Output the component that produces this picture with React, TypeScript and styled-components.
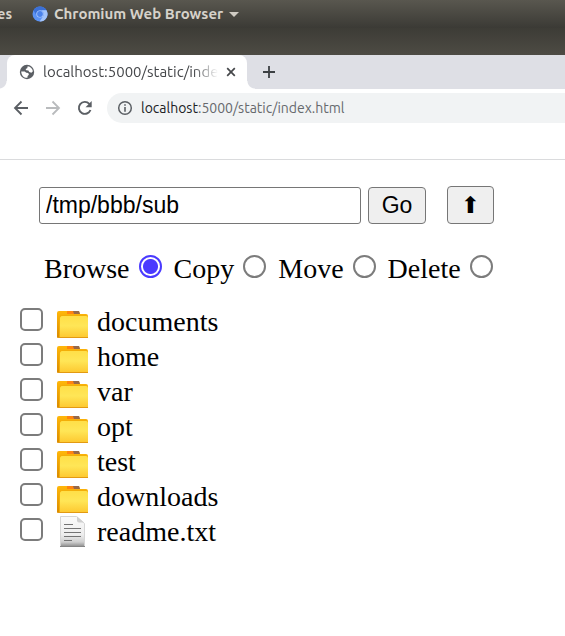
import React, { useState } from "react";
import styled, { createGlobalStyle } from "styled-components";

const uiFont = `"Ubuntu", "Noto Sans", "Open Sans", sans-serif`;

const GlobalStyle = createGlobalStyle`
  *, *::before, *::after { box-sizing: border-box; }
  body { margin: 0; background: #fff; overflow-x: hidden; }
`;

const Window = styled.div`
  color: #000;
  font-family: "Liberation Serif", "Times New Roman", serif;
  font-size: 28px;
`;

const SystemBar = styled.header`
  display: flex;
  align-items: center;
  height: 28px;
  background: linear-gradient(#59574f, #3b3a35);
  color: #d6d2ca;
  font: 700 15px/28px ${uiFont};
  white-space: nowrap;
`;

const Activities = styled.button`
  width: 12px;
  margin-right: 20px;
  padding: 0;
  border: 0;
  background: none;
  color: inherit;
  font: 700 14px/28px ${uiFont};
  text-align: left;
  direction: rtl;
`;

const AppMenu = styled.button`
  display: flex;
  align-items: center;
  gap: 6px;
  padding: 0;
  border: 0;
  background: none;
  color: inherit;
  font: inherit;
`;

const TitleBar = styled.div`
  height: 27px;
  background: linear-gradient(#3d3c36, #4d4b44);
`;

const TabStrip = styled.div`
  display: flex;
  align-items: center;
  height: 34px;
  padding-left: 7px;
  background: #dedfe5;
`;

const Tab = styled.div`
  position: relative;
  display: flex;
  align-items: center;
  width: 240px;
  height: 34px;
  padding: 0 8px 0 12px;
  border-radius: 8px 8px 0 0;
  background: #fff;
  color: #45474a;
  font: 15px/34px ${uiFont};

  &::before,
  &::after {
    content: "";
    position: absolute;
    bottom: 0;
    width: 8px;
    height: 8px;
  }
  &::before {
    right: 100%;
    background: radial-gradient(circle at 0 0, transparent 7px, #fff 8px);
  }
  &::after {
    left: 100%;
    background: radial-gradient(circle at 100% 0, transparent 7px, #fff 8px);
  }
`;

const TabTitle = styled.span`
  flex: 1;
  min-width: 0;
  margin: 0 5px 0 8px;
  overflow: hidden;
  white-space: nowrap;
  mask-image: linear-gradient(90deg, #000 86%, transparent);
`;

const IconButton = styled.button`
  display: grid;
  place-items: center;
  flex: none;
  width: 16px;
  height: 16px;
  padding: 0;
  border: 0;
  background: none;
`;

const NewTab = styled(IconButton)`
  margin-left: 14px;
`;

const Toolbar = styled.div`
  display: flex;
  align-items: center;
  gap: 16px;
  height: 38px;
  padding-left: 13px;
  background: #fff;
`;

const AddressBar = styled.div`
  display: flex;
  align-items: center;
  flex: 1;
  gap: 8px;
  height: 30px;
  margin-left: -2px;
  padding-left: 10px;
  border-radius: 15px 0 0 15px;
  background: #f1f3f4;
  color: #66696d;
  font: 14px/30px ${uiFont};
  white-space: nowrap;
`;

const Host = styled.span`
  color: #202124;
`;

const BookmarkBar = styled.div`
  height: 33px;
  border-bottom: 1px solid #dadbdd;
`;

const Page = styled.main`
  padding: 26px 20px;
`;

const PathForm = styled.form`
  display: flex;
  align-items: flex-end;
  padding-left: 19px;
`;

const PathInput = styled.input`
  flex: 0 1 322px;
  min-width: 0;
  height: 37px;
  padding: 0 6px;
  border: 1px solid #767676;
  border-radius: 3px;
  background: #fff;
  color: #000;
  font: 23px "Liberation Sans", Arial, sans-serif;
  outline: none;
`;

const PushButton = styled.button<{ $width: number; $height: number; $gap: number }>`
  flex: none;
  width: ${({ $width }) => $width}px;
  height: ${({ $height }) => $height}px;
  margin-left: ${({ $gap }) => $gap}px;
  padding: 0;
  border: 1px solid #767676;
  border-radius: 4px;
  background: #efefef;
  color: #000;
  font: 23px "Liberation Sans", "DejaVu Sans", sans-serif;
`;

const Modes = styled.div`
  display: flex;
  gap: 12px;
  padding: 28px 0 0 24px;
`;

const ModeLabel = styled.label`
  display: flex;
  align-items: flex-start;
  gap: 9px;
  height: 35px;
  line-height: 33px;
`;

const Radio = styled.input`
  appearance: none;
  width: 23px;
  height: 23px;
  margin: 3px 0 0;
  border: 2px solid #7c7c7c;
  border-radius: 50%;
  background: #fff;

  &:checked {
    border-color: #4a3aff;
    background: radial-gradient(circle, #4a3aff 7px, #fff 8px);
  }
`;

const FileList = styled.ul`
  margin: 18px 0 0;
  padding: 0;
  list-style: none;
`;

const FileRow = styled.label`
  display: flex;
  align-items: flex-start;
  height: 35px;
  line-height: 33px;
`;

const Checkbox = styled.input`
  appearance: none;
  width: 23px;
  height: 23px;
  margin: 3px 14px 0 0;
  border: 2px solid #7c7c7c;
  border-radius: 5px;
  background: #fff;

  &:checked {
    background: #4a3aff;
  }
`;

const FileIcon = styled.svg`
  flex: none;
  width: 32px;
  height: 35px;
  margin-right: 8px;
`;

function ChromiumLogo() {
  return (
    <svg width="16" height="16" viewBox="0 0 16 16" aria-hidden="true">
      <circle cx="8" cy="8" r="7.5" fill="#5b93f5" />
      <path d="M1.500 4.200A7.500 7.500 0 0 1 14.500 4.200H8A4 4 0 0 0 4.400 9.500Z" fill="#3b70d6" />
      <path d="M14.500 4.200A7.500 7.500 0 0 1 7.600 15.500L11.500 9.800A4 4 0 0 0 9 4.200Z" fill="#a3c4fb" />
      <circle cx="8" cy="8" r="3.600" fill="#b9d2fd" />
      <circle cx="8" cy="8" r="2.900" fill="#4b83ec" />
    </svg>
  );
}

function Globe() {
  return (
    <svg width="16" height="16" viewBox="0 0 16 16" aria-hidden="true">
      <circle cx="8" cy="8" r="7.2" fill="#5b5f64" />
      <path
        d="M8.7 2.200c2.800.3 4.900 2.500 5.200 5.100l-1.500 1.500-2.200-.7-.8-1.500-2.200-.3-.6-1.300 1.600-.7ZM2.200 7.400l3.500.2 1.600 1.100 2 .4.6 1.600-1.300 1.200-.2 1.900c-3.200.3-6.100-2.400-6.200-6.400Z"
        fill="#fff"
      />
    </svg>
  );
}

function Folder() {
  return (
    <FileIcon viewBox="0 0 32 35" aria-hidden="true">
      <defs>
        <linearGradient id="folderFront" x2="0" y2="1">
          <stop stopColor="#ffdf48" />
          <stop offset=".45" stopColor="#ffe657" />
          <stop offset="1" stopColor="#fdc72e" />
        </linearGradient>
        <linearGradient id="folderBack" x2="0" y2="1">
          <stop stopColor="#ffb70a" />
          <stop offset="1" stopColor="#d98a00" />
        </linearGradient>
      </defs>
      <path d="M0 8q0-2 2-2h20l1 3h6q2 0 2 2v22H1q-1 0-1-1Z" fill="url(#folderBack)" />
      <path d="M10 6h7v3h-7Z" fill="#ff8410" />
      <path d="M16 6h6l1 3h-6Z" fill="#96694a" />
      <path d="M3 33V13q0-2 2-2h24q2 0 2 2v20Z" fill="url(#folderFront)" />
      <path d="M2.500 32V12.500q0-2 2-2h25" fill="none" stroke="#f3ae08" />
      <path d="M1 32.500h30" stroke="#e39a12" />
    </FileIcon>
  );
}

function TextFile() {
  return (
    <FileIcon viewBox="0 1 32 35" aria-hidden="true">
      <defs>
        <linearGradient id="paper" x2="0" y2="1">
          <stop stopColor="#fafafa" />
          <stop offset=".6" stopColor="#eeeeee" />
          <stop offset=".85" stopColor="#cfcfcf" />
          <stop offset="1" stopColor="#8d8d8d" />
        </linearGradient>
      </defs>
      <path d="M3.500 2.500h16l8 7v23h-24Z" fill="url(#paper)" stroke="#d5d5d5" />
      <path d="M20 2.500v4q0 2 2 2h5Z" fill="#cfcfcf" />
      <path d="M3 32.500h25" stroke="#858585" />
      <path d="M7 10.500h9M7 14.500h17M7 18.500h17M7 22.500h17M7 26.500h8" stroke="#747474" />
    </FileIcon>
  );
}

const files = [
  { name: "documents", folder: true },
  { name: "home", folder: true },
  { name: "var", folder: true },
  { name: "opt", folder: true },
  { name: "test", folder: true },
  { name: "downloads", folder: true },
  { name: "readme.txt", folder: false },
];

const modes = ["Browse", "Copy", "Move", "Delete"];

export default function App() {
  const [mode, setMode] = useState("Browse");
  const [path, setPath] = useState("/tmp/bbb/sub");

  return (
    <Window>
      <GlobalStyle />
      <SystemBar>
        <Activities>es</Activities>
        <AppMenu>
          <ChromiumLogo />
          Chromium Web Browser
          <svg width="10" height="5" viewBox="0 0 10 5" aria-hidden="true">
            <path d="M0 0h10L5 5Z" fill="#cfcbc3" />
          </svg>
        </AppMenu>
      </SystemBar>
      <TitleBar />
      <TabStrip>
        <Tab>
          <Globe />
          <TabTitle>localhost:5000/static/index.html</TabTitle>
          <IconButton aria-label="Close tab">
            <svg width="16" height="16" viewBox="0 0 16 16">
              <path d="m4.200 4.200 7.600 7.600m0-7.600-7.600 7.600" stroke="#45474a" strokeWidth="1.700" />
            </svg>
          </IconButton>
        </Tab>
        <NewTab aria-label="New tab">
          <svg width="16" height="16" viewBox="0 0 16 16">
            <path d="M8 2v12M2 8h12" stroke="#3c4043" strokeWidth="1.800" />
          </svg>
        </NewTab>
      </TabStrip>
      <Toolbar>
        <IconButton aria-label="Back">
          <svg width="16" height="16" viewBox="0 0 16 16">
            <path d="M15 8H2M8.500 1.500 2 8l6.500 6.500" fill="none" stroke="#5b5f64" strokeWidth="1.800" />
          </svg>
        </IconButton>
        <IconButton aria-label="Forward" disabled>
          <svg width="16" height="16" viewBox="0 0 16 16">
            <path d="M1 8h13M7.500 1.500 14 8l-6.500 6.500" fill="none" stroke="#b9bbbd" strokeWidth="1.800" />
          </svg>
        </IconButton>
        <IconButton aria-label="Reload">
          <svg width="16" height="16" viewBox="0 0 16 16">
            <path d="M13.500 10A6 6 0 1 1 12.300 3.800L13.500 5" fill="none" stroke="#5b5f64" strokeWidth="1.900" />
            <path d="M14.700 1v6.200H8.500Z" fill="#5b5f64" />
          </svg>
        </IconButton>
        <AddressBar>
          <svg width="16" height="16" viewBox="0 0 16 16" aria-hidden="true">
            <circle cx="8" cy="8" r="6.300" fill="none" stroke="#5b5f64" strokeWidth="1.500" />
            <path d="M8 4.200v1.600M8 7v4.800" stroke="#5b5f64" strokeWidth="1.600" />
          </svg>
          <span>
            <Host>localhost</Host>:5000/static/index.html
          </span>
        </AddressBar>
      </Toolbar>
      <BookmarkBar />
      <Page>
        <PathForm onSubmit={(e) => e.preventDefault()}>
          <PathInput aria-label="Path" value={path} onChange={(e) => setPath(e.target.value)} />
          <PushButton $width={58} $height={37} $gap={7}>Go</PushButton>
          <PushButton type="button" $width={47} $height={38} $gap={21} aria-label="Up one folder">⬆</PushButton>
        </PathForm>
        <Modes>
          {modes.map((name) => (
            <ModeLabel key={name}>
              {name}
              <Radio type="radio" name="mode" checked={mode === name} onChange={() => setMode(name)} />
            </ModeLabel>
          ))}
        </Modes>
        <FileList>
          {files.map((file) => (
            <li key={file.name}>
              <FileRow>
                <Checkbox type="checkbox" />
                {file.folder ? <Folder /> : <TextFile />}
                {file.name}
              </FileRow>
            </li>
          ))}
        </FileList>
      </Page>
    </Window>
  );
}
